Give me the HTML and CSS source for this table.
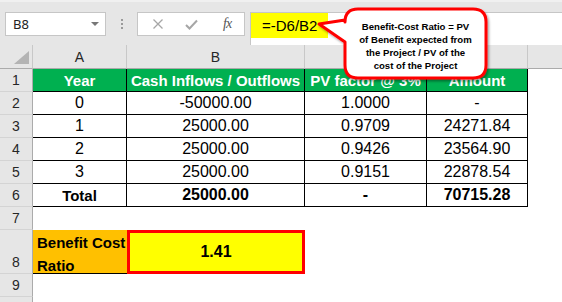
FILE: index.html
```html
<!DOCTYPE html>
<html>
<head>
<meta charset="utf-8">
<link rel="stylesheet" href="styles.css">
</head>
<body>
<div class="app">
  <div class="fbar">
    <div class="namebox"><span class="nb-text">B8</span><span class="caret"></span></div>
    <div class="dots"><i></i><i></i><i></i></div>
    <div class="fbtns">
      <svg class="ico-x" width="12" height="12" viewBox="0 0 12 12"><path d="M1.5 1.5 L10.5 10.5 M10.5 1.5 L1.5 10.5" stroke="#a6a6a6" stroke-width="1.3" fill="none"/></svg>
      <svg class="ico-ok" width="13" height="11" viewBox="0 0 13 11"><path d="M1 6 L4.5 9.5 L12 1.5" stroke="#a6a6a6" stroke-width="2" fill="none"/></svg>
      <span class="fx">fx</span>
    </div>
    <div class="finput"><span class="formula">=-D6/B2</span></div>
  </div>

  <div class="sheet">
    <div class="corner"><span class="tri"></span></div>
    <div class="ch">A</div>
    <div class="ch">B</div>
    <div class="ch">C</div>
    <div class="ch">D</div>
    <div class="ch last"></div>

    <div class="rh">1</div>
    <div class="hd">Year</div>
    <div class="hd">Cash Inflows / Outflows</div>
    <div class="hd">PV factor @ 3%</div>
    <div class="hd">Amount</div>
    <div class="bl"></div>

    <div class="rh">2</div>
    <div class="td">0</div>
    <div class="td">-50000.00</div>
    <div class="td">1.0000</div>
    <div class="td">-</div>
    <div class="bl"></div>

    <div class="rh">3</div>
    <div class="td">1</div>
    <div class="td">25000.00</div>
    <div class="td">0.9709</div>
    <div class="td">24271.84</div>
    <div class="bl"></div>

    <div class="rh">4</div>
    <div class="td">2</div>
    <div class="td">25000.00</div>
    <div class="td">0.9426</div>
    <div class="td">23564.90</div>
    <div class="bl"></div>

    <div class="rh">5</div>
    <div class="td">3</div>
    <div class="td">25000.00</div>
    <div class="td">0.9151</div>
    <div class="td">22878.54</div>
    <div class="bl"></div>

    <div class="rh">6</div>
    <div class="td b">Total</div>
    <div class="td b n">25000.00</div>
    <div class="td b n">-</div>
    <div class="td b n">70715.28</div>
    <div class="bl"></div>

    <div class="rh">7</div>
    <div class="bl"></div><div class="bl"></div><div class="bl"></div><div class="bl"></div><div class="bl"></div>

    <div class="rh bottom">8</div>
    <div class="label">Benefit Cost<br>Ratio</div>
    <div class="result">1.41</div>
    <div class="bl"></div><div class="bl"></div><div class="bl"></div>

    <div class="rh">9</div>
    <div class="bl"></div><div class="bl"></div><div class="bl"></div><div class="bl"></div><div class="bl"></div>

    <div class="rh"></div>
    <div class="bl"></div><div class="bl"></div><div class="bl"></div><div class="bl"></div><div class="bl"></div>
  </div>

  <div class="callout">
    <svg class="callout-shape" width="562" height="90" viewBox="0 0 562 90">
      <defs>
        <filter id="sh" x="-10%" y="-10%" width="130%" height="140%">
          <feDropShadow dx="1.5" dy="2" stdDeviation="1.2" flood-color="#000" flood-opacity="0.35"/>
        </filter>
      </defs>
      <path filter="url(#sh)" d="M358 9 H473 Q486 9 486 22 V65 Q486 78 473 78 H358 Q345 78 345 65 V42 L319 24 L345 20 V22 Q345 9 358 9 Z" fill="#fff" stroke="#ff0000" stroke-width="3" stroke-linejoin="round"/>
    </svg>
    <div class="callout-text">Benefit-Cost Ratio = PV<br>of Benefit expected from<br>the Project / PV of the<br>cost of the Project</div>
  </div>
</div>
</body>
</html>
```

FILE: styles.css
```css
* { box-sizing: border-box; }
html, body { margin: 0; padding: 0; }
body {
  width: 562px;
  height: 302px;
  overflow: hidden;
  background: #fff;
  font-family: "Liberation Sans", Arial, sans-serif;
}
.app { position: relative; width: 562px; height: 302px; overflow: hidden; }

/* formula bar */
.fbar {
  display: flex;
  align-items: flex-start;
  height: 45px;
  padding-top: 12px;
  background: #e6e6e6;
  border-top: 2px solid #f0f0f0;
}
.namebox {
  margin-left: 5px;
  width: 101px;
  height: 24px;
  margin-top: -2px;
  background: #fff;
  border: 1px solid #c6c6c6;
  display: flex;
  align-items: center;
  justify-content: space-between;
  padding: 0 6px 0 7px;
}
.nb-text { font-family: "Noto Sans", sans-serif; font-size: 13px; color: #222; }
.caret {
  width: 0; height: 0;
  border-left: 4px solid transparent;
  border-right: 4px solid transparent;
  border-top: 4px solid #777;
}
.dots {
  width: 31px;
  height: 24px;
  margin-top: -2px;
  display: flex;
  flex-direction: column;
  align-items: center;
  justify-content: center;
  gap: 2px;
}
.dots i { display: block; width: 2px; height: 2px; background: #9a9a9a; }
.fbtns {
  width: 108px;
  height: 24px;
  margin-top: -2px;
  background: #fff;
  border: 1px solid #c6c6c6;
  display: flex;
  align-items: center;
  padding-left: 14px;
}
.ico-ok { margin-left: 21px; }
.fx {
  margin-left: 25px;
  font-family: "Liberation Serif", serif;
  font-style: italic;
  font-size: 14px;
  color: #555;
  letter-spacing: -1px;
}
.finput {
  margin-left: 5px;
  flex: 1;
  height: 33px;
  margin-top: -2px;
  background: #fff;
  border-top: 1px solid #c6c6c6;
  border-left: 1px solid #c6c6c6;
}
.formula {
  display: flex;
  align-items: center;
  width: 77px;
  height: 25px;
  background: #ffff00;
  padding-left: 11px;
  font-size: 15px;
  color: #000;
}

/* sheet */
.sheet {
  display: grid;
  grid-template-columns: 33px 94px 178px 122px 101px 1fr;
  grid-template-rows: 24px repeat(7, 23px) 44px 23px 23px;
}
.corner {
  background: #e6e6e6;
  border-right: 1px solid #c8c8c8;
  border-bottom: 1px solid #ababab;
  display: flex;
  justify-content: flex-end;
  align-items: flex-end;
  padding: 0 3px 4px 0;
}
.tri {
  width: 15px;
  height: 13px;
  background: #b4b4b4;
  clip-path: polygon(100% 0, 100% 100%, 0 100%);
}
.ch {
  background: #e6e6e6;
  border-right: 1px solid #c8c8c8;
  border-bottom: 1px solid #ababab;
  display: flex;
  align-items: center;
  justify-content: center;
  font-size: 14px;
  color: #262626;
}
.ch.last { border-right: none; }
.rh {
  background: #e6e6e6;
  border-right: 1px solid #ababab;
  border-bottom: 1px solid #d4d4d4;
  display: flex;
  align-items: center;
  justify-content: center;
  font-size: 14px;
  color: #262626;
}
.rh.bottom { align-items: flex-end; padding-bottom: 3px; }
.bl { background: #fff; }
.hd {
  background: #00b050;
  color: #fff;
  font-weight: bold;
  font-size: 15px;
  border-right: 1px solid #000;
  border-bottom: 1px solid #000;
  display: flex;
  align-items: center;
  justify-content: center;
  white-space: nowrap;
}
.td {
  background: #fff;
  color: #000;
  font-size: 16px;
  border-right: 1px solid #000;
  border-bottom: 1px solid #000;
  display: flex;
  align-items: center;
  justify-content: center;
}
.td.b { font-weight: bold; font-size: 15px; }
.td.b.n { font-size: 16px; }
.label {
  background: #ffc000;
  border-bottom: 1px solid #000;
  font-weight: bold;
  font-size: 15px;
  line-height: 23px;
  padding: 1px 0 0 4px;
  color: #000;
}
.result {
  background: #ffff00;
  border: 3px solid #ff0000;
  font-weight: bold;
  font-size: 16px;
  display: flex;
  align-items: center;
  justify-content: center;
  color: #000;
}

/* callout */
.callout { position: absolute; left: 0; top: 0; width: 562px; height: 90px; pointer-events: none; }
.callout-shape { position: absolute; left: 0; top: 0; }
.callout-text {
  position: absolute;
  left: 345px;
  top: 20px;
  width: 141px;
  text-align: center;
  font-weight: bold;
  font-size: 9.6px;
  line-height: 13px;
  color: #000;
}
```
